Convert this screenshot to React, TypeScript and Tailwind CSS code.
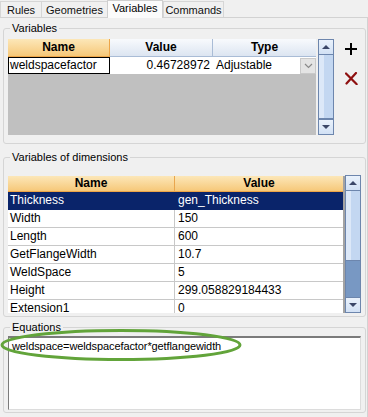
import React from "react";

const vars = [
  { name: "Thickness", value: "gen_Thickness" },
  { name: "Width", value: "150" },
  { name: "Length", value: "600" },
  { name: "GetFlangeWidth", value: "10.7" },
  { name: "WeldSpace", value: "5" },
  { name: "Height", value: "299.058829184433" },
  { name: "Extension1", value: "0" },
];

function Arrow({ up }: { up?: boolean }) {
  return (
    <div
      className={`h-[15px] shrink-0 flex items-center justify-center bg-linear-to-b from-[#eaf2fc] to-[#d2e1f5] border-[#6d86ad] ${up ? "border-b" : "border-t"}`}
    >
      {up ? (
        <div className="w-0 h-0 border-x-[4px] border-x-transparent border-b-[4px] border-b-[#3b4768]" />
      ) : (
        <div className="w-0 h-0 border-x-[4px] border-x-transparent border-t-[4px] border-t-[#3b4768]" />
      )}
    </div>
  );
}

function ScrollBar({ height, thumb }: { height: string; thumb: string }) {
  return (
    <div className={`w-[16px] ${height} flex flex-col border border-[#6d86ad] bg-[#7898c3]`}>
      <Arrow up />
      <div className={`${thumb} flex border-b border-[#6d86ad]`}>
        <div className="w-[5px] bg-[#dce8f8]" />
        <div className="flex-1 bg-[#c3d7f1]" />
      </div>
      <div className="flex-1" />
      <Arrow />
    </div>
  );
}

function Tab({ label, w, active }: { label: string; w: string; active?: boolean }) {
  return active ? (
    <div className={`${w} h-[18px] -mb-px bg-[#fbfbfb] border border-b-0 border-[#cfcfcf] text-center leading-[15px] relative z-10`}>
      {label}
    </div>
  ) : (
    <div className={`${w} h-[16px] bg-[#f0f0f0] border border-b-0 border-[#d6d6d6] -mr-px text-center leading-[16px] text-[#111]`}>
      {label}
    </div>
  );
}

export default function App() {
  return (
    <div className="relative w-[368px] h-[417px] bg-[#f0f0f0] overflow-hidden font-['Liberation_Sans',Arial,sans-serif] text-black">
      {/* Tabs */}
      <div className="flex items-end h-[17px] text-[11px]">
        <Tab label="Rules" w="w-[42px]" />
        <Tab label="Geometries" w="w-[67px]" />
        <Tab label="Variables" w="w-[56px]" active />
        <Tab label="Commands" w="w-[61px]" />
      </div>

      {/* Panel */}
      <div className="h-[400px] border-t border-r border-[#d2d2d2] pt-[4px]">
        {/* Variables group */}
        <fieldset className="ml-[3px] w-[363px] border border-[#d5d5d5] rounded-[3px] pl-[4px] pt-[4px] pb-[8px]">
          <legend className="ml-[2px] px-[2px] text-[11px] leading-[13px]">Variables</legend>
          <div className="flex items-start">
            <div className="w-[308px] h-[96px] bg-[#c0c0c0] flex flex-col text-[12px]">
              <div className="flex h-[18px] font-bold leading-[17px]">
                <div className="w-[102px] text-center bg-linear-to-b from-[#fce7b8] to-[#f6c878] border-b border-r border-[#eda548]">Name</div>
                <div className="w-[103px] text-center bg-linear-to-b from-[#f8fafd] to-[#dce5f1] border-b border-r border-[#a9bcd6]">Value</div>
                <div className="w-[103px] text-center bg-linear-to-b from-[#f8fafd] to-[#dce5f1] border-b border-[#a9bcd6]">Type</div>
              </div>
              <div className="flex h-[17px] bg-white leading-[15px]">
                <div className="w-[102px] border border-black pl-[1px]">weldspacefactor</div>
                <div className="w-[103px] text-right pr-[3px] leading-[17px]">0.46728972</div>
                <div className="w-[103px] flex items-center leading-[17px]">
                  <span className="flex-1 pl-[3px]">Adjustable</span>
                  <div className="w-[16px] h-[16px] bg-[#e4e4e4] border border-[#c9c9c9] flex items-center justify-center">
                    <svg width="9" height="6" viewBox="0 0 9 6">
                      <path d="M1 1 L4.5 4.5 L8 1" fill="none" stroke="#8a8a8a" strokeWidth="1.2" />
                    </svg>
                  </div>
                </div>
              </div>
            </div>
            <div className="ml-[2px]">
              <ScrollBar height="h-[96px]" thumb="h-[65px]" />
            </div>
            <div className="ml-[11px] pt-[4px] flex flex-col gap-[17px]">
              <svg width="12" height="12" viewBox="0 0 12 12">
                <path d="M6 0 V12 M0 6 H12" stroke="#000" strokeWidth="2" />
              </svg>
              <svg width="13" height="13" viewBox="0 0 13 13">
                <path d="M1 1.5 L11.5 12 M11 1 L1.5 11.5" stroke="#8e1010" strokeWidth="2.2" strokeLinecap="round" fill="none" />
                <path d="M9.5 10.5 L12.5 12.5" stroke="#8e1010" strokeWidth="1" />
              </svg>
            </div>
          </div>
        </fieldset>

        {/* Variables of dimensions group */}
        <fieldset className="mt-[7px] ml-[3px] w-[363px] border border-[#d5d5d5] rounded-[3px] pl-[4px] pt-[11px] pb-[3px]">
          <legend className="ml-[2px] px-[2px] text-[11px] leading-[13px]">Variables of dimensions</legend>
          <div className="flex items-start">
            <div className="mt-[1px] w-[337px] h-[137px] overflow-hidden border-r-2 border-[#a3a3a3] bg-white text-[12px]">
              <div className="flex h-[16px] font-bold leading-[15px] bg-linear-to-b from-[#fce7b8] to-[#f6c878] border-b border-[#eda548]">
                <div className="w-[167px] text-center border-r border-[#e9a64e]">Name</div>
                <div className="flex-1 text-center">Value</div>
              </div>
              {vars.map((v, i) => (
                <div
                  key={v.name}
                  className={`flex h-[18px] leading-[17px] border-b ${i === 0 ? "bg-[#0a246a] text-white border-[#0a246a]" : "border-[#c8c8c8]"}`}
                >
                  <div className={`w-[167px] pl-[2px] border-r ${i === 0 ? "border-[#0a246a]" : "border-[#c8c8c8]"}`}>{v.name}</div>
                  <div className="flex-1 pl-[3px]">{v.value}</div>
                </div>
              ))}
            </div>
            <ScrollBar height="h-[138px]" thumb="h-[70px]" />
          </div>
        </fieldset>

        {/* Equations group */}
        <fieldset className="mt-[4px] ml-[3px] w-[363px] border border-[#d5d5d5] rounded-[3px] pl-[4px] pt-[2px] pb-[2px]">
          <legend className="ml-[2px] px-[2px] text-[11px] leading-[13px]">Equations</legend>
          <div className="w-[353px] h-[74px] bg-white border-t-2 border-l border-[#7b7b7b] border-r border-b border-r-[#dcdcdc] border-b-[#dcdcdc] pl-[3px] pt-[2px] text-[11px] leading-[13px] tracking-[-0.1px]">
            weldspace=weldspacefactor*getflangewidth
          </div>
        </fieldset>
      </div>

      {/* Highlight ellipse drawn over the equation */}
      <svg className="absolute left-0 top-[328px]" width="248" height="36" viewBox="0 0 248 36">
        <ellipse cx="121" cy="17" rx="119" ry="14.5" fill="none" stroke="#62a43a" strokeWidth="3" />
      </svg>
    </div>
  );
}
